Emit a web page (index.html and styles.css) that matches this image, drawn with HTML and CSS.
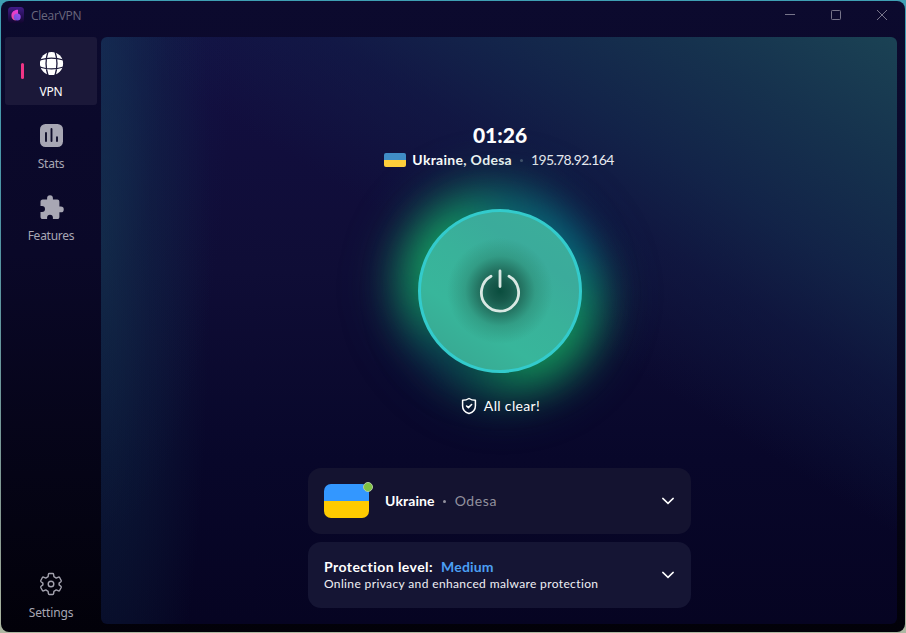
FILE: index.html
```html
<!DOCTYPE html>
<html lang="en">
<head>
<meta charset="utf-8">
<title>ClearVPN</title>
<link rel="stylesheet" href="styles.css">
</head>
<body>
<div class="window">
  <header class="titlebar">
    <svg class="logo" width="16" height="16" viewBox="0 0 16 16">
      <defs>
        <linearGradient id="lb" x1="0" y1="0" x2="0" y2="1"><stop offset="0" stop-color="#411c88"/><stop offset="1" stop-color="#12062f"/></linearGradient>
        <linearGradient id="lp" x1="0" y1="0" x2="0" y2="1"><stop offset="0" stop-color="#e23adf"/><stop offset="1" stop-color="#f04a92"/></linearGradient>
        <linearGradient id="lv" x1="1" y1="0" x2="0" y2="1"><stop offset="0" stop-color="#a34df0"/><stop offset="1" stop-color="#6750d6"/></linearGradient>
      </defs>
      <rect width="16" height="16" rx="3.5" fill="url(#lb)"/>
      <path d="M10 2.700V7L7.500 13.500C4.800 13.300 3.300 11 3.400 8.300C3.500 5 6.200 2.600 10 2.700Z" fill="url(#lp)"/>
      <circle cx="9.200" cy="10" r="3.500" fill="url(#lv)"/>
    </svg>
    <span class="app-name">ClearVPN</span>
    <div class="controls">
      <svg width="46" height="28" viewBox="0 0 46 28"><path d="M18 13.500H28"/></svg>
      <svg width="46" height="28" viewBox="0 0 46 28"><rect x="18.500" y="9.500" width="9" height="9" rx=".8"/></svg>
      <svg width="46" height="28" viewBox="0 0 46 28"><path d="M18 9L28 19M28 9L18 19"/></svg>
    </div>
  </header>
  <div class="body">
    <nav class="sidebar">
      <a class="item active">
        <svg width="24" height="26" viewBox="0 0 24 26">
          <circle cx="11.500" cy="13.500" r="11.600" fill="#fff"/>
          <g transform="translate(-.5 1.500)" fill="none" stroke="#1b1839" stroke-width="1.300"><path d="M8.500 0C6.200 7 6.200 17 8.500 24M15.500 0C17.800 7 17.800 17 15.500 24M0 8.500C7 6.200 17 6.200 24 8.500M0 15.500C7 17.800 17 17.800 24 15.500"/></g>
        </svg>
        <span>VPN</span>
      </a>
      <a class="item">
        <svg width="24" height="26" viewBox="0 0 24 26">
          <rect x="0" y="2" width="23" height="23" rx="5.500" fill="#a8a7b4"/>
          <path d="M6 11V19M11.500 7V19M17 15.300V19" stroke="#100e2b" stroke-width="1.900" stroke-linecap="round"/>
        </svg>
        <span>Stats</span>
      </a>
      <a class="item">
        <svg width="26" height="26" viewBox="0 0 26 26"><path transform="translate(-.3 .6)" fill="#a8a7b4" d="M22.200 12H20.700V7.200C20.700 5.800 19.700 5 18.600 5H14.200V3.500A2.900 2.900 0 0 0 8.400 3.500V5H4C2.600 5 1.800 6 1.800 7.200V11.300H3.300A3 3 0 0 1 3.300 17.300H1.800V22.200C1.800 23.700 2.700 24.500 4 24.500H8.400V23A2.900 2.900 0 0 1 14.200 23V24.500H18.600C20 24.500 20.700 23.500 20.700 22.300V17.700H22.200A2.850 2.850 0 0 0 22.200 12Z"/></svg>
        <span>Features</span>
      </a>
      <a class="item bottom">
        <svg width="24" height="24" viewBox="0 0 24 24" fill="none" stroke="#a3a2ae" stroke-width="1.400" stroke-linejoin="round">
          <path d="M10.300 1.500H13.700Q14.500 1.500 14.600 2.300L14.900 4.700L17.200 6.100L19.500 5.100Q20.200 4.900 20.600 5.500L22.200 8.500Q22.500 9.200 21.900 9.700L20.100 11.100V12.900L21.900 14.300Q22.500 14.800 22.200 15.500L20.600 18.500Q20.200 19.100 19.500 18.900L17.200 17.900L14.900 19.300L14.600 21.700Q14.500 22.500 13.700 22.500H10.300Q9.500 22.500 9.400 21.700L9.100 19.300L6.800 17.900L4.500 18.900Q3.800 19.100 3.400 18.500L1.800 15.500Q1.500 14.800 2.100 14.300L3.900 12.900V11.100L2.100 9.700Q1.500 9.200 1.800 8.500L3.400 5.500Q3.800 4.900 4.500 5.100L6.800 6.100L9.100 4.700L9.400 2.300Q9.500 1.500 10.300 1.500Z"/><circle cx="12" cy="12" r="2.800"/>
        </svg>
        <span>Settings</span>
      </a>
    </nav>
    <main class="panel">
      <div class="timer">01:26</div>
      <div class="location">
        <i class="flag small"></i>
        <b>Ukraine, Odesa</b><i class="sep dim"></i><span class="ip">195.78.92.164</span>
      </div>
      <div class="power">
        <button class="power-button" aria-label="Disconnect">
          <svg width="46" height="46" viewBox="0 0 46 46" fill="none" stroke="#d9e8e3" stroke-width="2.800" stroke-linecap="round"><path d="M23 3V18.500M14 8.300A18.600 18.600 0 1 0 32 8.300"/></svg>
        </button>
      </div>
      <div class="status">
        <svg width="16" height="18" viewBox="0 0 16 18" fill="none" stroke="#fff" stroke-linejoin="round" stroke-linecap="round"><path stroke-width="1.500" d="M8 1.500C9.800 2.700 11.900 3.300 14.400 3.300V8.900C14.400 12.600 12 15.200 8 16.500C4 15.200 1.600 12.600 1.600 8.900V3.300C4.100 3.300 6.200 2.700 8 1.500Z"/><path stroke-width="1.600" d="M5.600 9L7.400 10.600L10.600 7.500"/></svg>
        <span>All clear!</span>
      </div>
      <div class="cards">
        <section class="card">
          <div class="flag big"><i class="online"></i></div>
          <b class="country">Ukraine</b><i class="sep"></i><span class="city">Odesa</span>
          <svg class="chevron" width="14" height="8" viewBox="0 0 14 8"><path d="M1.800 1.400L7 6.400L12.200 1.400"/></svg>
        </section>
        <section class="card">
          <div class="protection">
            <div class="level"><b>Protection level:</b><b class="medium">Medium</b></div>
            <div class="desc">Online privacy and enhanced malware protection</div>
          </div>
          <svg class="chevron" width="14" height="8" viewBox="0 0 14 8"><path d="M1.800 1.400L7 6.400L12.200 1.400"/></svg>
        </section>
      </div>
    </main>
  </div>
</div>
</body>
</html>
```
FILE: styles.css
```css
* { box-sizing: border-box; }
html, body { margin: 0; height: 100%; }
body {
  padding: 1px;
  overflow: hidden;
  background: linear-gradient(#3fa0b4, #4f94a4 35%, #8b9c93 85%, #aeb8a2);
  font-family: Lato, "Open Sans", sans-serif;
  color: #fff;
}
.window {
  height: 631px;
  border-radius: 8px;
  overflow: hidden;
  background: linear-gradient(#0c0a2e, #0a0828 40%, #050416 75%, #020109);
}
.titlebar {
  height: 36px;
  display: flex;
  align-items: flex-start;
  padding-left: 7px;
}
.logo { margin-top: 6px; }
.app-name {
  margin: 6px 0 0 7px;
  font: 12px/17px "Open Sans", sans-serif;
  letter-spacing: -.25px;
  color: #6a687d;
}
.controls { display: flex; margin-left: auto; }
.controls svg { fill: none; stroke: #77758a; stroke-width: 1; }
.body { display: flex; height: 587px; padding: 0 8px 0 4px; gap: 4px; }

.sidebar { width: 92px; display: flex; flex-direction: column; gap: 4px; }
.item {
  position: relative;
  height: 68px;
  display: flex;
  flex-direction: column;
  align-items: center;
  border-radius: 3px;
  font: 12px/16px "Noto Sans", sans-serif;
  letter-spacing: -.25px;
  color: #a8a7b4;
}
.item svg { height: 26px; margin: 13px 0 8px 2px; }
.item.active { background: #1b1839; color: #fff; }
.item.active::before {
  content: "";
  position: absolute;
  left: 16px;
  top: 26px;
  width: 3px;
  height: 16px;
  border-radius: 2px;
  background: #f03585;
}
.item.bottom { margin-top: auto; margin-bottom: -3px; }
.item.bottom svg { margin: 12px 0 8px; }
.item.bottom span { letter-spacing: -.15px; }

.panel {
  flex: 1;
  position: relative;
  display: flex;
  flex-direction: column;
  align-items: center;
  padding-left: 2px;
  border-radius: 6px;
  overflow: hidden;
  background:
    radial-gradient(ellipse 110px 640px at 0 35%, rgba(20, 62, 82, .5), rgba(16, 50, 74, .3) 45%, rgba(13, 26, 62, 0)),
    radial-gradient(ellipse 130px 500px at 0 0, rgba(24, 52, 98, .5), rgba(18, 34, 80, .25) 50%, rgba(14, 20, 60, 0)),
    linear-gradient(212deg, rgba(27, 69, 85, .95), rgba(22, 55, 80, .85) 13%, rgba(19, 43, 77, .74) 24%, rgba(17, 34, 74, .45) 33%, rgba(14, 20, 65, 0) 46%),
    linear-gradient(#130f42, #0f0d36 40%, #08072a 72%, #060422);
}
.timer {
  margin-top: 86px;
  height: 24px;
  font-size: 21px;
  line-height: 24px;
  font-weight: 900;
}
.location {
  display: flex;
  align-items: center;
  height: 20px;
  margin: 3px 2px 0 0;
  font-size: 14px;
  line-height: 20px;
  white-space: nowrap;
}
.location b { margin-left: 6px; letter-spacing: .3px; }
.ip { color: #e8eaf0; letter-spacing: -.65px; }
.flag { display: block; background: linear-gradient(#3397ff 50%, #ffcb00 50%); }
.flag.small { width: 22px; height: 14px; border-radius: 2px; background: linear-gradient(#408dc5 50%, #ffcf3b 50%); }
.flag.big { position: relative; width: 45px; height: 34px; border-radius: 7px; margin-right: 16px; }
.online {
  position: absolute;
  top: -2px;
  right: -4px;
  width: 10px;
  height: 10px;
  border-radius: 50%;
  border: 1px solid #b4cda1;
  background: #80c342;
}
.sep { width: 3px; height: 3px; margin: 1px 8px 0; border-radius: 50%; background: #92919e; }
.sep.dim { background: #46506c; }

.power { position: relative; width: 164px; height: 164px; margin-top: 39px; }
.power::before, .power::after {
  content: "";
  position: absolute;
  border-radius: 50%;
}
.power::before {
  inset: -16px;
  background: conic-gradient(from 0deg, #0c6676, #087083 18%, #12956b 27%, #17a65d 35%, #149b58 44%, #0c514b 54%, #0b4550 62%, #14935b 74%, #18ad62 84%, #149863 92%, #0c6676);
  filter: blur(18px);
}
.power::after {
  inset: -38px;
  background: linear-gradient(140deg, rgba(18, 143, 93, .5), rgba(7, 70, 91, .18) 45%, rgba(7, 70, 91, .18) 55%, rgba(14, 140, 85, .5));
  filter: blur(20px);
}
.power-button {
  position: relative;
  z-index: 1;
  display: grid;
  place-items: center;
  width: 164px;
  height: 164px;
  padding: 0;
  border: 3px solid #33cbcc;
  border-radius: 50%;
  background:
    radial-gradient(circle at center, #0a4d3e 0, #17594b 10px, rgba(33, 108, 91, .88) 22px, rgba(45, 139, 117, .55) 35px, rgba(55, 176, 151, 0) 53px),
    linear-gradient(35deg, #38a28e, #38b69b 32%, #39b29a 53%, #3bab9b 72%, #3caf9b);
}
.status {
  position: relative;
  z-index: 2;
  display: flex;
  align-items: center;
  gap: 7px;
  height: 20px;
  margin: 23px 0 0 1px;
  font-size: 14px;
  line-height: 20px;
}
.status span { letter-spacing: .35px; }
.cards { position: relative; display: flex; flex-direction: column; gap: 8px; margin: 52px 1px 0 0; }
.card {
  width: 383px;
  height: 66px;
  display: flex;
  align-items: center;
  padding: 0 16px;
  border-radius: 13px;
  background: #141330;
  font-size: 14px;
  line-height: 18px;
  white-space: nowrap;
}
.card + .card { background: #151534; }
.country { letter-spacing: .1px; }
.city { margin-left: 1px; color: #92919e; letter-spacing: .6px; }
.chevron { margin-left: auto; fill: none; stroke: #fff; stroke-width: 1.5; stroke-linecap: round; }
.level { display: flex; gap: 8px; letter-spacing: .45px; }
.medium { color: #4b9ff3; letter-spacing: .15px; }
.desc { font-size: 12px; line-height: 16px; letter-spacing: .37px; color: #f0f0f4; }
```
